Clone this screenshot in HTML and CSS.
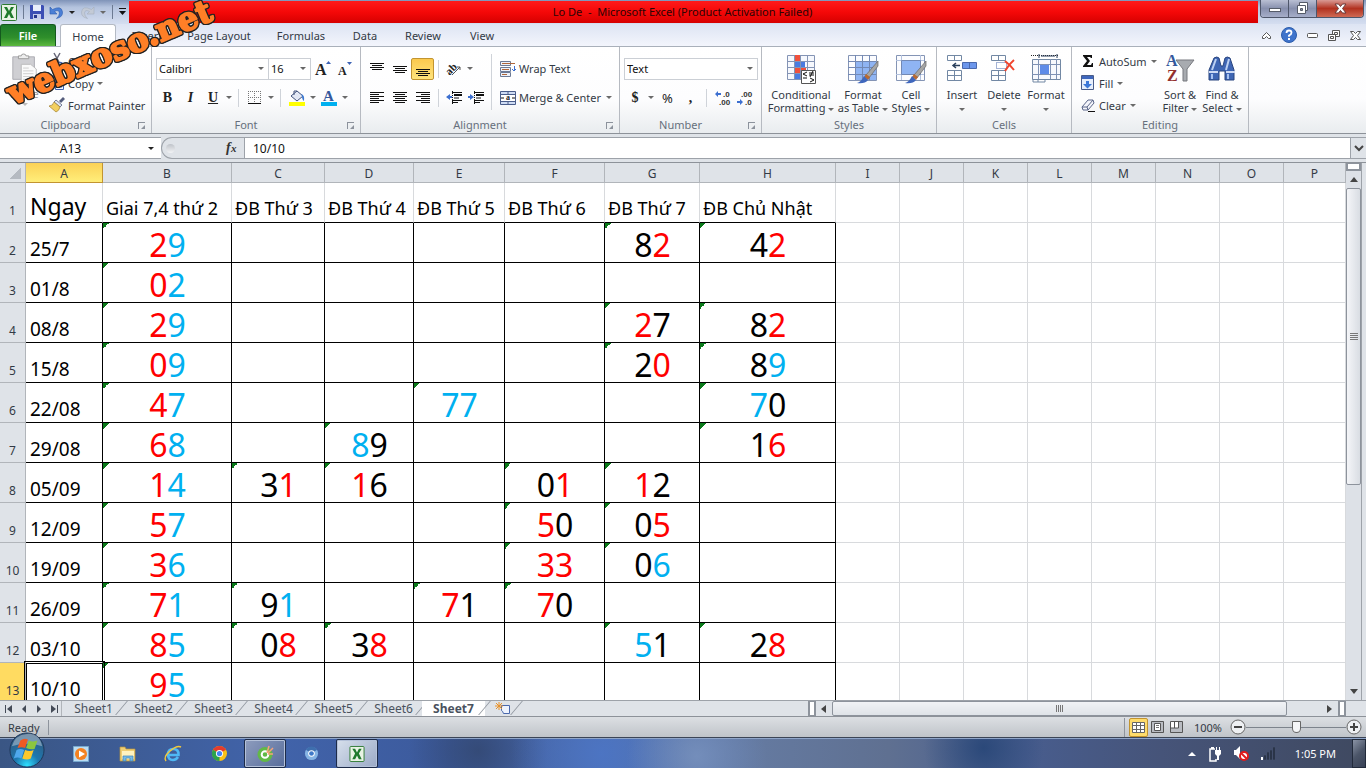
FILE: index.html
```html
<!DOCTYPE html>
<html lang="vi">
<head>
  <meta charset="UTF-8">
  <meta name="viewport" content="width=device-width, initial-scale=1.0">
  <title>Lo De - Microsoft Excel</title>
  <link rel="stylesheet" href="styles.css">
</head>
<body>

<header class="titlebar">
  <div class="quick-access">
    <svg width="16" height="17" viewBox="0 0 16 17"><rect x=".5" y=".5" width="15" height="16" rx="1" fill="#e8f3e4" stroke="#2e7a32"/><path d="M3 3h3l2 4 2-4h3L10 8l3 6h-3L8 10l-2 4H3l3-6z" fill="#1f7a2c"/></svg>
    <span class="bar"></span>
    <button aria-label="Save"><svg width="14" height="14" viewBox="0 0 14 14"><path d="M0 0h13l1 1v13H0z" fill="#3c4fb4"/><path d="M3 0h8v6H3z" fill="#e9eefb"/><path d="M3 9h8v5H3z" fill="#c4cbea"/><path d="M4 10h3v3H4z" fill="#26368c"/></svg></button>
    <button aria-label="Undo"><svg width="13" height="13" viewBox="0 0 13 13"><path d="M0 1v7h7L4.500 5.500Q9 3 9.500 7q0 3-3 5.500Q13 11 12.500 6 11.500-1 2.500 3.500z" fill="#4b7fd6" stroke="#2c5cae" stroke-width=".6"/></svg></button>
    <span class="caret dark"></span>
    <button aria-label="Redo"><svg width="13" height="13" viewBox="0 0 13 13"><path d="M13 1v7H6l2.500-2.500Q4 3 3.500 7q0 3 3 5.500Q0 11 .5 6 1.500-1 10.500 3.500z" fill="#c3cad6" stroke="#a5aebd" stroke-width=".6"/></svg></button>
    <span class="caret"></span>
    <span class="bar"></span>
    <button aria-label="Customize"><svg width="7" height="8" viewBox="0 0 7 8"><path d="M0 0h7v1H0zM0 3h7L3.500 7z" fill="#111"/></svg></button>
  </div>
  <h1 class="window-title">Lo De&nbsp; -&nbsp; Microsoft Excel (Product Activation Failed)</h1>
  <div class="window-buttons">
    <button aria-label="Minimize"><svg width="14" height="8" viewBox="0 0 14 8"><rect x="1.500" y="3.500" width="11" height="3" fill="#fff" stroke="#555b68"/></svg></button>
    <button aria-label="Restore"><svg width="13" height="13" viewBox="0 0 13 13"><path d="M3.500.5h8v8h-8z" fill="#fff" stroke="#555b68"/><path d="M1.500 3.500h8v8h-8z" fill="#fff" stroke="#555b68"/><path d="M4.500 6.500h2v2h-2z" fill="#8a91a5" stroke="#555b68"/></svg></button>
    <button class="close" aria-label="Close"><svg width="13" height="11" viewBox="0 0 13 11"><path d="M1 1h3.500l2 2.500 2-2.500H12L8.500 5.500 12 10H8.500l-2-2.500-2 2.500H1l3.500-4.500z" fill="#fff" stroke="#6b3a3a"/></svg></button>
  </div>
</header>

<nav class="tabs">
  <button class="file">File</button>
  <button class="active">Home</button>
  <button class="t-insert">Insert</button>
  <button class="t-layout">Page Layout</button>
  <button class="t-formulas">Formulas</button>
  <button class="t-data">Data</button>
  <button class="t-review">Review</button>
  <button class="t-view">View</button>
  <div class="tab-tools">
    <button aria-label="Minimize ribbon"><svg width="9" height="7" viewBox="0 0 9 7"><path d="M.5 4.500l4-4 4 4v2h-2l-2-2-2 2h-2z" fill="#fff" stroke="#555"/></svg></button>
    <button aria-label="Help"><svg width="16" height="16" viewBox="0 0 16 16"><circle cx="8" cy="8" r="7.500" fill="#3f74cc" stroke="#2b5cab"/><path d="M5.500 6Q5.500 3.500 8 3.500t2.500 2.300Q10.500 7.500 8 8.500v1.300" fill="none" stroke="#fff" stroke-width="1.800"/><path d="M7 11h2v2H7z" fill="#fff"/></svg></button>
    <button aria-label="Minimize window"><svg width="11" height="5" viewBox="0 0 11 5"><rect x=".5" y=".5" width="10" height="4" rx="1" fill="#fff" stroke="#555"/></svg></button>
    <button aria-label="Restore window"><svg width="12" height="11" viewBox="0 0 12 11"><path d="M4.500.5h7v6h-7z" fill="#fff" stroke="#555"/><path d="M6.500 2.500h3v2h-3z" fill="none" stroke="#555"/><path d="M.5 4.500h7v6h-7z" fill="#fff" stroke="#555"/><path d="M2.500 6.500h3v2h-3z" fill="none" stroke="#555"/></svg></button>
    <button aria-label="Close window"><svg width="11" height="9" viewBox="0 0 11 9"><path d="M.5.5h3l2 2 2-2h3l-3 4 3 4h-3l-2-2-2 2h-3l3-4z" fill="#fff" stroke="#555"/></svg></button>
  </div>
</nav>

<section class="ribbon">
  <div class="group g-clipboard">
    <div class="group-body">
      <button class="big paste"><svg width="28" height="32" viewBox="0 0 28 32"><path d="M1 3h23v24H1z" fill="#cfcfd3" stroke="#aaaab0"/><path d="M7 5V2h3q0-2 2.500-2T15 2h3v3z" fill="#eee" stroke="#999"/><path d="M10 11h10l6 5v14H10z" fill="#fafafa" stroke="#bbb"/><path d="M12 15h6M12 18h11M12 21h11M12 24h11M12 27h11" stroke="#ccc"/></svg><span>Paste</span><span class="caret pale"></span></button>
      <div class="stack">
        <button><svg width="16" height="16" viewBox="0 0 16 16"><path d="M5 0l5 9M11 0L6 9" stroke="#667" stroke-width="1.500"/><circle cx="5" cy="12" r="2.500" fill="none" stroke="#3c62b4" stroke-width="1.500"/><circle cx="11" cy="12" r="2.500" fill="none" stroke="#3c62b4" stroke-width="1.500"/></svg>Cut</button>
        <button><svg width="16" height="16" viewBox="0 0 16 16"><path d="M1.500 1.500h7v10h-7zM6.500 5.500h8v9h-8z" fill="#eef3fc" stroke="#3c62b4"/><path d="M8 8h5M8 10h5M8 12h5" stroke="#3c62b4"/></svg>Copy <span class="caret"></span></button>
        <button><svg width="16" height="16" viewBox="0 0 16 16"><path d="M10 4l4-4 2 2-4 4z" fill="#555d7c"/><path d="M7 3l6 5-2 2-6-5z" fill="#dfe4f2" stroke="#777f99"/><path d="M5 5l6 5q-1 4-4 5L0 9q4 0 5-4z" fill="#f2cf60" stroke="#a17f2f" stroke-width=".7"/></svg>Format Painter</button>
      </div>
    </div>
    <h2>Clipboard</h2><i class="launcher"></i>
  </div>

  <div class="group g-font">
    <div class="group-body rows">
      <div class="row">
        <span class="select font-name"><select aria-label="Font"><option>Calibri</option></select></span>
        <span class="select font-size"><select aria-label="Font size"><option>16</option></select></span>
        <button class="w23" aria-label="Grow font"><svg width="16" height="18" viewBox="0 0 16 18"><text x="0" y="15" class="serif-a" font-size="16">A</text><path d="M11 4l2.500-3L16 4z" fill="#3c62b4"/></svg></button>
        <button class="w22" aria-label="Shrink font"><svg width="14" height="18" viewBox="0 0 14 18"><text x="0" y="15" class="serif-a" font-size="12">A</text><path d="M9 2h5l-2.500 3z" fill="#3c62b4"/></svg></button>
      </div>
      <div class="row">
        <button class="w23 serif"><b>B</b></button>
        <button class="w23 serif"><b><i>I</i></b></button>
        <button class="w22 serif"><b><u>U</u></b></button>
        <span class="caret c10"></span><span class="sep"></span>
        <button class="w23" aria-label="Borders"><svg width="14" height="14" viewBox="0 0 14 14"><path d="M.5 0v13M6.500 0v13M12.500 0v13M0 .5h13M0 6.500h13" stroke="#777" stroke-dasharray="1 1"/><path d="M0 12.500h13" stroke="#111"/></svg></button>
        <span class="caret c10"></span><span class="sep"></span>
        <button class="w23" aria-label="Fill color"><svg width="16" height="16" viewBox="0 0 16 16"><path d="M2 6l6-5 6 5-6 5z" fill="#e3e8f5" stroke="#44547e"/><path d="M5 5V1h3" fill="none" stroke="#44547e"/><path d="M12 4q4 1 3 7-2-1-2-5z" fill="#3c78d0"/><path d="M0 12h16v4H0z" fill="#ff0"/></svg></button>
        <span class="caret c10"></span>
        <button class="w22" aria-label="Font color"><svg width="16" height="16" viewBox="0 0 16 16"><text x="2" y="11" class="serif-a blue" font-size="15">A</text><path d="M0 12h16v4H0z" fill="#00b0f0"/></svg></button>
        <span class="caret c10"></span>
      </div>
    </div>
    <h2>Font</h2><i class="launcher"></i>
  </div>

  <div class="group g-align">
    <div class="group-body">
      <div class="rows">
        <div class="row">
          <button class="w23" aria-label="Top align"><svg width="14" height="14" viewBox="0 0 14 14"><path d="M0 1.500h14M2 3.500h10M0 5.500h14M2 7.500h10" stroke="#111"/></svg></button>
          <button class="w23" aria-label="Middle align"><svg width="14" height="14" viewBox="0 0 14 14"><path d="M0 4.500h14M2 6.500h10M0 8.500h14M2 10.500h10" stroke="#111"/></svg></button>
          <button class="w23 pressed" aria-label="Bottom align"><svg width="14" height="14" viewBox="0 0 14 14"><path d="M0 7.500h14M2 9.500h10M0 11.500h14M2 13.500h10" stroke="#111"/></svg></button>
          <span class="sep"></span>
          <button class="w22" aria-label="Orientation"><svg width="17" height="15" viewBox="0 0 17 15"><text x="0" y="12" transform="rotate(-45 5 9)" font-size="11" class="serif-a">ab</text><path d="M6 14l8-8M14 9V6h-3" fill="none" stroke="#555"/></svg></button>
          <span class="caret c10"></span>
        </div>
        <div class="row">
          <button class="w23" aria-label="Align left"><svg width="14" height="12" viewBox="0 0 14 12"><path d="M0 .5h14M0 2.500h9M0 4.500h14M0 6.500h9M0 8.500h14M0 10.500h9" stroke="#111"/></svg></button>
          <button class="w23" aria-label="Center"><svg width="14" height="12" viewBox="0 0 14 12"><path d="M0 .5h14M2 2.500h10M0 4.500h14M2 6.500h10M0 8.500h14M2 10.500h10" stroke="#111"/></svg></button>
          <button class="w23" aria-label="Align right"><svg width="14" height="12" viewBox="0 0 14 12"><path d="M0 .5h14M5 2.500h9M0 4.500h14M5 6.500h9M0 8.500h14M5 10.500h9" stroke="#111"/></svg></button>
          <span class="sep"></span>
          <button class="w22" aria-label="Decrease indent"><svg width="16" height="14" viewBox="0 0 16 14"><path d="M6 1.500h10M8 7h5M6 9.500h10M6 11.500h6" stroke="#111"/><path d="M8 4h8" stroke="#111" stroke-width="2"/><path d="M6.500 0v14" stroke="#111" stroke-dasharray="1 1"/><path d="M0 6l4-3v2h2v2H4v2z" fill="#3c6fd0"/></svg></button>
          <button class="w22" aria-label="Increase indent"><svg width="16" height="14" viewBox="0 0 16 14"><path d="M6 1.500h10M8 7h5M6 9.500h10M6 11.500h6" stroke="#111"/><path d="M8 4h8" stroke="#111" stroke-width="2"/><path d="M6.500 0v14" stroke="#111" stroke-dasharray="1 1"/><path d="M6 6L2 3v2H0v2h2v2z" fill="#3c6fd0"/></svg></button>
        </div>
      </div>
      <span class="sep tall"></span>
      <div class="rows">
        <button class="label-btn"><svg width="16" height="16" viewBox="0 0 16 16"><path d="M.5.500h10v4H.5zM.5 6.500h10v4H.5zM.5 11.500h10v4H.5z" fill="#eef2fa" stroke="#6c7a95"/><path d="M2 2.500h13M2 8.500h7M2 13.500h5" stroke="#b0673a"/><path d="M14.500 5v4M12 8l2 2 2-2" fill="none" stroke="#3c6fd0"/></svg>Wrap Text</button>
        <button class="label-btn"><svg width="16" height="14" viewBox="0 0 16 14"><path d="M.5.500h15v13H.5z" fill="#cfdcf3" stroke="#4a5d8a"/><path d="M0 3.500h16M0 10.500h16M8 0v3M8 11v3" stroke="#4a5d8a"/><path d="M1 4h14v6H1z" fill="#fff"/><text x="6" y="9" font-size="8" class="serif-a">a</text><path d="M1 7h3M12 7h3" stroke="#111"/></svg>Merge &amp; Center <span class="caret"></span></button>
      </div>
    </div>
    <h2>Alignment</h2><i class="launcher"></i>
  </div>

  <div class="group g-number">
    <div class="group-body rows">
      <div class="row">
        <span class="select number-format"><select aria-label="Number format"><option>Text</option></select></span>
      </div>
      <div class="row">
        <button class="w22 serif"><b>$</b></button><span class="caret c10"></span>
        <button class="w23 percent">%</button>
        <button class="w23 serif"><b>,</b></button>
        <span class="sep"></span>
        <button class="w23" aria-label="Increase decimal"><svg width="16" height="14" viewBox="0 0 16 14"><text x="8" y="6" class="dec">.0</text><text x="4" y="14" class="dec">.00</text><path d="M0 3l3-3v2h3v2H3v2z" fill="#3c6fd0"/></svg></button>
        <button class="w22" aria-label="Decrease decimal"><svg width="16" height="14" viewBox="0 0 16 14"><text x="4" y="6" class="dec">.00</text><text x="8" y="14" class="dec">.0</text><path d="M6 11L3 8v2H0v2h3v2z" fill="#3c6fd0"/></svg></button>
      </div>
    </div>
    <h2>Number</h2><i class="launcher"></i>
  </div>

  <div class="group g-styles">
    <div class="group-body">
      <button class="big"><svg width="30" height="30" viewBox="0 0 30 30"><path d="M1.500 1.500h27v24h-27z" fill="#f6f8fd" stroke="#8494b5"/><path d="M8 1h6v24H8z" fill="#f0503c"/><path d="M8 7h11v6H8z" fill="#4a7be0"/><path d="M8 19h6v6H8z" fill="#4a7be0"/><path d="M8 13h12v6H8z" fill="#f0503c"/><path d="M8.500 1v24M14.500 1v24M21.500 1v24M1 7.500h27M1 13.500h27M1 19.500h27" stroke="#8494b5"/><path d="M15.500 16.500h14v13h-14z" fill="#fff" stroke="#555"/><path d="M21 18l-4 2 4 2M17 24h4M23 19h5M23 21h5M27 17l-3 6M24 24l4 2-4 2" fill="none" stroke="#111"/></svg><span>Conditional<br>Formatting <span class="caret"></span></span></button>
      <button class="big mid"><svg width="32" height="30" viewBox="0 0 32 30"><path d="M1.500 1.500h28v25h-28z" fill="#fbfcff" stroke="#8494b5"/><path d="M8 8h21v18H8z" fill="#8fb4f3"/><path d="M8.500 1v25M15.500 1v25M22.500 1v25M1 7.500h28M1 13.500h28M1 20.500h28" stroke="#7288b4"/><path d="M31 7v5l-9 12-3-3z" fill="#a6a6a6" stroke="#666" stroke-width=".7"/><path d="M19 20l4 3-2 3-4-3z" fill="#b86a32"/><path d="M17 22l4 4q-3 4-11 3 4-1 7-7z" fill="#3f67bd"/></svg><span>Format<br>as Table <span class="caret"></span></span></button>
      <button class="big small"><svg width="32" height="30" viewBox="0 0 32 30"><path d="M1.500 1.500h28v25h-28z" fill="#fbfcff" stroke="#8494b5"/><path d="M1 6.500h28M1 20.500h28M6.500 1v25M25.500 1v25" stroke="#b3c2de"/><path d="M6.500 6.500h19v14h-19z" fill="#8fb4f3" stroke="#7288b4"/><path d="M31 7v5l-9 12-3-3z" fill="#a6a6a6" stroke="#666" stroke-width=".7"/><path d="M19 20l4 3-2 3-4-3z" fill="#b86a32"/><path d="M17 22l4 4q-3 4-11 3 4-1 7-7z" fill="#3f67bd"/></svg><span>Cell<br>Styles <span class="caret"></span></span></button>
    </div>
    <h2>Styles</h2>
  </div>

  <div class="group g-cells">
    <div class="group-body">
      <button class="big small"><svg width="32" height="30" viewBox="0 0 32 30"><path d="M1.500 1.500h14v5h-14zM1.500 16.500h14v10h-14zM8.500 16v10M1 21.500h14M8.500 1v5" fill="#fff" stroke="#7288a4"/><path d="M16.500 8.500h14v6h-14z" fill="#6d97ec" stroke="#4a69ad"/><path d="M23.500 8v6" stroke="#4a69ad"/><path d="M7 11.500h7M10 9l-3 2.500 3 2.500" fill="none" stroke="#2a3f5c" stroke-width="1.500"/></svg><span>Insert<br><span class="caret"></span></span></button>
      <button class="big small"><svg width="28" height="30" viewBox="0 0 28 30"><path d="M1.500 1.500h14v5h-14zM1.500 16.500h14v10h-14zM8.500 16v10M1 21.500h14M8.500 1v5" fill="#fff" stroke="#7288a4"/><path d="M6.500 8.500h10v6h-10z" fill="none" stroke="#4a69ad" stroke-dasharray="1 1"/><path d="M15 7q5 4 9 9M24 6q-5 4-9 11" fill="none" stroke="#f0452e" stroke-width="2"/></svg><span>Delete<br><span class="caret"></span></span></button>
      <button class="big small"><svg width="32" height="30" viewBox="0 0 32 30"><path d="M2.500 5.500h28v20h-28z" fill="#f7f9fd" stroke="#7288a4"/><path d="M10 10h9v10h-9z" fill="#5d8be8"/><path d="M8.500 5v20M20.500 5v20M26.500 5v20M2 10.500h28M2 20.500h28" stroke="#7f92b4"/><path d="M3 25v3h12v-3M8 28v-3" fill="none" stroke="#7288a4"/><path d="M1 1.500h28" stroke="#222" stroke-dasharray="1 1"/><path d="M9 0v4M27 0v4M11 2h14" stroke="#2a3f5c"/></svg><span>Format<br><span class="caret"></span></span></button>
    </div>
    <h2>Cells</h2>
  </div>

  <div class="group g-editing">
    <div class="group-body">
      <div class="stack">
        <button><svg width="14" height="14" viewBox="0 0 14 14"><path d="M2 1h9v3h-1L9 3H6l3 4-3 4h4l1-2h1v4H2v-1l4-5-4-5z" fill="#111"/></svg>AutoSum <span class="caret"></span></button>
        <button><svg width="14" height="16" viewBox="0 0 14 16"><path d="M.5.500h12v14H.5z" fill="#e7effc" stroke="#4a5d8a"/><path d="M1 1h11v3H1z" fill="#3f67bd"/><path d="M5 6h3v3h3l-4.500 4.500L2 9h3z" fill="#3c78d8"/></svg>Fill <span class="caret"></span></button>
        <button><svg width="14" height="13" viewBox="0 0 14 13"><path d="M1 8l6-7h5l1 3-6 7H2z" fill="#f4f5fb" stroke="#5b678a"/><path d="M1 8h5l6-7M6 8l1 3" fill="none" stroke="#5b678a"/><path d="M7 12.500h7" stroke="#111"/></svg>Clear <span class="caret"></span></button>
      </div>
      <button class="big small"><svg width="30" height="30" viewBox="0 0 30 30"><path d="M11 6h18l-7 9v12h-4V15z" fill="#a8abb0" stroke="#77797f"/><text x="1" y="12" font-size="16" class="serif-a blue">A</text><text x="2" y="27" font-size="16" class="serif-a red">Z</text></svg><span>Sort &amp;<br>Filter <span class="caret"></span></span></button>
      <button class="big small"><svg width="28" height="28" viewBox="0 0 28 28"><path d="M6 3q3-2 5 0l2 8h2l2-8q2-2 5 0l4 12v10h-9v-9h-6v9H1V15z" fill="#3f66b4" stroke="#29447e"/><path d="M4 15l4-11M18 15l3-11" stroke="#bcd0f2" stroke-width="2"/><path d="M1 17h9M18 17h9" stroke="#cddaf4" stroke-width="2"/><path d="M4 19v5M20 19v5" stroke="#a7c2f0" stroke-width="2"/></svg><span>Find &amp;<br>Select <span class="caret"></span></span></button>
    </div>
    <h2>Editing</h2>
  </div>
</section>

<div class="formula-bar">
  <div class="name-box"><input aria-label="Name box" value="A13"><span class="caret dark"></span></div>
  <div class="fx"><span class="knob"></span><svg width="16" height="16" viewBox="0 0 16 16"><text x="2" y="12" class="fx-f">f</text><text x="7" y="12" class="fx-x">x</text></svg></div>
  <input class="formula" aria-label="Formula" value="10/10">
  <button class="expand" aria-label="Expand formula bar"><svg width="8" height="6" viewBox="0 0 8 6"><path d="M0 1l4 4 4-4" fill="none" stroke="#444" stroke-width="2"/></svg></button>
</div>

<main class="workspace">
  <div class="sheet">
    <table>
      <colgroup><col class="c-num"><col class="c-a"><col class="c-b"><col class="c-c"><col class="c-d"><col class="c-e"><col class="c-f"><col class="c-g"><col class="c-h"><col class="c-w"><col class="c-w"><col class="c-w"><col class="c-w"><col class="c-w"><col class="c-w"><col class="c-w"><col></colgroup>
      <thead>
        <tr><th class="corner"></th><th class="current">A</th><th>B</th><th>C</th><th>D</th><th>E</th><th>F</th><th>G</th><th>H</th><th>I</th><th>J</th><th>K</th><th>L</th><th>M</th><th>N</th><th>O</th><th>P</th></tr>
      </thead>
      <tbody>
        <tr class="heads"><th>1</th><td class="ngay">Ngay</td><td>Giai 7,4 thứ 2</td><td>ĐB Thứ 3</td><td>ĐB Thứ 4</td><td>ĐB Thứ 5</td><td>ĐB Thứ 6</td><td>ĐB Thứ 7</td><td>ĐB Chủ Nhật</td><td></td><td></td><td></td><td></td><td></td><td></td><td></td><td></td></tr>
        <tr><th>2</th><td>25/7</td><td class="n"><b>2</b><i>9</i></td><td></td><td></td><td></td><td></td><td class="n">8<b>2</b></td><td class="n">4<b>2</b></td><td></td><td></td><td></td><td></td><td></td><td></td><td></td><td></td></tr>
        <tr><th>3</th><td>01/8</td><td class="n"><b>0</b><i>2</i></td><td></td><td></td><td></td><td></td><td></td><td></td><td></td><td></td><td></td><td></td><td></td><td></td><td></td><td></td></tr>
        <tr><th>4</th><td>08/8</td><td class="n"><b>2</b><i>9</i></td><td></td><td></td><td></td><td></td><td class="n"><b>2</b>7</td><td class="n">8<b>2</b></td><td></td><td></td><td></td><td></td><td></td><td></td><td></td><td></td></tr>
        <tr><th>5</th><td>15/8</td><td class="n"><b>0</b><i>9</i></td><td></td><td></td><td></td><td></td><td class="n">2<b>0</b></td><td class="n">8<i>9</i></td><td></td><td></td><td></td><td></td><td></td><td></td><td></td><td></td></tr>
        <tr><th>6</th><td>22/08</td><td class="n"><b>4</b><i>7</i></td><td></td><td></td><td class="n"><i>77</i></td><td></td><td></td><td class="n"><i>7</i>0</td><td></td><td></td><td></td><td></td><td></td><td></td><td></td><td></td></tr>
        <tr><th>7</th><td>29/08</td><td class="n"><b>6</b><i>8</i></td><td></td><td class="n"><i>8</i>9</td><td></td><td></td><td></td><td class="n">1<b>6</b></td><td></td><td></td><td></td><td></td><td></td><td></td><td></td><td></td></tr>
        <tr><th>8</th><td>05/09</td><td class="n"><b>1</b><i>4</i></td><td class="n">3<b>1</b></td><td class="n"><b>1</b>6</td><td></td><td class="n">0<b>1</b></td><td class="n"><b>1</b>2</td><td></td><td></td><td></td><td></td><td></td><td></td><td></td><td></td><td></td></tr>
        <tr><th>9</th><td>12/09</td><td class="n"><b>5</b><i>7</i></td><td></td><td></td><td></td><td class="n"><b>5</b>0</td><td class="n">0<b>5</b></td><td></td><td></td><td></td><td></td><td></td><td></td><td></td><td></td><td></td></tr>
        <tr><th>10</th><td>19/09</td><td class="n"><b>3</b><i>6</i></td><td></td><td></td><td></td><td class="n"><b>33</b></td><td class="n">0<i>6</i></td><td></td><td></td><td></td><td></td><td></td><td></td><td></td><td></td><td></td></tr>
        <tr><th>11</th><td>26/09</td><td class="n"><b>7</b><i>1</i></td><td class="n">9<i>1</i></td><td></td><td class="n"><b>7</b>1</td><td class="n"><b>7</b>0</td><td></td><td></td><td></td><td></td><td></td><td></td><td></td><td></td><td></td><td></td></tr>
        <tr><th>12</th><td class="above">03/10</td><td class="n"><b>8</b><i>5</i></td><td class="n">0<b>8</b></td><td class="n">3<b>8</b></td><td></td><td></td><td class="n"><i>5</i>1</td><td class="n">2<b>8</b></td><td></td><td></td><td></td><td></td><td></td><td></td><td></td><td></td></tr>
        <tr><th class="current">13</th><td class="selected">10/10</td><td class="n"><b>9</b><i>5</i></td><td></td><td></td><td></td><td></td><td></td><td></td><td></td><td></td><td></td><td></td><td></td><td></td><td></td><td></td></tr>
      </tbody>
    </table>
  </div>
  <div class="vscroll">
    <span class="split"></span>
    <span class="arrow"><i class="tri up"></i></span>
    <span class="thumb"></span>
    <span class="track"></span>
    <span class="arrow"><i class="tri down"></i></span>
  </div>
</main>

<div class="sheet-bar">
  <div class="sheet-nav">
    <svg width="8" height="8" viewBox="0 0 8 8"><path d="M0 0h1v8H0zM7 0v8L2 4z" fill="#444b57"/></svg>
    <svg width="8" height="8" viewBox="0 0 8 8"><path d="M6 0v8L2 4z" fill="#444b57"/></svg>
    <svg width="8" height="8" viewBox="0 0 8 8"><path d="M2 0v8l4-4z" fill="#444b57"/></svg>
    <svg width="8" height="8" viewBox="0 0 8 8"><path d="M7 0h1v8H7zM1 0v8l5-4z" fill="#444b57"/></svg>
  </div>
  <div class="sheet-tabs">
    <button>Sheet1</button><button>Sheet2</button><button>Sheet3</button><button>Sheet4</button><button>Sheet5</button><button>Sheet6</button><button class="active">Sheet7</button>
    <button class="new" aria-label="Insert worksheet"><svg width="16" height="13" viewBox="0 0 16 13"><path d="M6.500 3.500h8v8h-6q-1-3-2-3z" fill="#eef3fd" stroke="#4a69ad"/><path d="M4 0v8M0 4h8M1 1l6 6M7 1L1 7" stroke="#e8922a"/></svg></button>
  </div>
  <div class="hscroll">
    <span class="grab"></span>
    <i class="tri left"></i>
    <span class="hthumb"></span>
    <span class="htrack"></span>
    <i class="tri right"></i>
    <span class="grab"></span>
  </div>
</div>

<footer class="status">
  <span class="ready">Ready</span>
  <div class="views">
    <button class="on" aria-label="Normal"><svg width="13" height="11" viewBox="0 0 13 11"><path d="M.5.500h12v10H.5zM4.500 0v11M8.500 0v11M0 3.500h13M0 7.500h13" fill="#fff" stroke="#666"/></svg></button>
    <button aria-label="Page layout"><svg width="13" height="12" viewBox="0 0 13 12"><path d="M.5.500h12v11H.5z" fill="#b9bcc2" stroke="#555"/><path d="M3.500 2.500h6v7h-6z" fill="#fff" stroke="#555"/><path d="M5 4.500h3M5 6.500h3" stroke="#777"/></svg></button>
    <button aria-label="Page break"><svg width="13" height="12" viewBox="0 0 13 12"><path d="M.5.500h12v11H.5z" fill="#b9bcc2" stroke="#555"/><path d="M1 1h3v6H1zM5 1h3v6H5z" fill="#fff"/><path d="M4.500 0v7M8.500 0v7H0" fill="none" stroke="#555"/></svg></button>
  </div>
  <span class="percent-label">100%</span>
  <svg width="16" height="16" viewBox="0 0 16 16"><circle cx="8" cy="8" r="7" fill="#eef0f3" stroke="#666"/><path d="M4 8h8" stroke="#444" stroke-width="2"/></svg>
  <input class="zoom" type="range" aria-label="Zoom" min="0" max="100" value="50">
  <svg width="16" height="16" viewBox="0 0 16 16"><circle cx="8" cy="8" r="7" fill="#eef0f3" stroke="#666"/><path d="M4 8h8M8 4v8" stroke="#444" stroke-width="2"/></svg>
</footer>

<div class="taskbar">
  <button class="start" aria-label="Start"><svg width="36" height="36" viewBox="0 0 38 38"><defs><radialGradient id="orb" cx=".5" cy=".95" r=".9"><stop offset="0" stop-color="#2fe0ff"/><stop offset=".4" stop-color="#1d78b0"/><stop offset="1" stop-color="#33597e"/></radialGradient></defs><circle cx="19" cy="19" r="18" fill="url(#orb)" stroke="#1b3557"/><path d="M3 15Q6 3 19 2t16 13Q19 10 3 15z" fill="#fff" opacity=".35"/><path d="M12 9q4-3 8-1l-3 9q-4-2-8 0z" fill="#ee5a24"/><path d="M21 9q4 2 9 0l-3 9q-4 1-9-1z" fill="#8cc63f"/><path d="M8 19q4-2 8 0l-3 9q-4-2-8 0z" fill="#4fa8ec"/><path d="M17 19q5 2 9 0l-3 9q-4 2-9 0z" fill="#fcc82c"/></svg></button>
  <button class="app" aria-label="Media Player"><svg width="16" height="16" viewBox="0 0 16 16"><path d="M.5.500h15v15H.5z" fill="#bcdcf2" stroke="#77a9cf"/><circle cx="8" cy="8" r="6" fill="#f58220"/><path d="M6 4.500L12 8l-6 3.500z" fill="#fff"/></svg></button>
  <button class="app" aria-label="Explorer"><svg width="17" height="16" viewBox="0 0 17 16"><path d="M1 1h5l1 2h9v12H1z" fill="#f0cf74" stroke="#b7923c" stroke-width=".7"/><path d="M3 5h12v8H3z" fill="#fff3c0"/><path d="M4 15v-5h10v5h-3v-3H7v3z" fill="#75bce8" stroke="#3c83b8" stroke-width=".7"/></svg></button>
  <button class="app" aria-label="Internet Explorer"><svg width="18" height="17" viewBox="0 0 18 17"><path d="M14 12q-2 3-5 3-5 0-5-5.500T9 4q6 0 5.500 6H5" fill="none" stroke="#4fb8f4" stroke-width="2.600"/><path d="M2 16Q-1 12 6 6t11-4" fill="none" stroke="#f3c93a" stroke-width="1.500"/></svg></button>
  <button class="app" aria-label="Chrome"><svg width="15" height="15" viewBox="0 0 16 16"><circle cx="8" cy="8" r="8" fill="#fbc116"/><path d="M8 8L1 4a8 8 0 0 1 14 0z" fill="#e33b2e"/><path d="M8 8v8A8 8 0 0 1 1 4z" fill="#2ba24c"/><circle cx="8" cy="8" r="3.800" fill="#fff"/><circle cx="8" cy="8" r="2.800" fill="#4285f4"/></svg></button>
  <button class="app open" aria-label="Coc Coc"><svg width="17" height="17" viewBox="0 0 17 17"><circle cx="8" cy="9.500" r="7.500" fill="#62b946"/><circle cx="8" cy="9.500" r="3.300" fill="none" stroke="#fff" stroke-width="2"/><path d="M10 8l2-7M11 8l5-5M11 9h5" stroke="#f6a27b" stroke-width="1.500"/></svg></button>
  <button class="app" aria-label="Chromium"><svg width="15" height="15" viewBox="0 0 16 16"><circle cx="8" cy="8" r="7" fill="#86b4e4"/><path d="M8 8L2 4a7 7 0 0 1 12 0z" fill="#3f6fae"/><circle cx="8" cy="8" r="3.500" fill="#fff"/><circle cx="8" cy="8" r="2.500" fill="#3f79c8"/></svg></button>
  <button class="app open current" aria-label="Excel"><svg width="16" height="16" viewBox="0 0 16 17"><rect x=".5" y=".5" width="15" height="16" rx="1" fill="#e8f3e4" stroke="#2e7a32"/><path d="M3 3h3l2 4 2-4h3L10 8l3 6h-3L8 10l-2 4H3l3-6z" fill="#1f7a2c"/></svg></button>
  <div class="tray">
    <svg width="8" height="4" viewBox="0 0 8 4"><path d="M0 4l4-4 4 4z" fill="#fff"/></svg>
    <svg width="14" height="16" viewBox="0 0 14 16"><path d="M7 3H2v12h6v-2" fill="none" stroke="#fff" stroke-width="1.500"/><path d="M3 1h3v2H3z" fill="#fff"/><path d="M7 4h6v4l-2 2v4H9v-4L7 8zM8 1h1v3H8zM11 1h1v3h-1z" fill="#fff"/></svg>
    <svg width="15" height="15" viewBox="0 0 15 15"><path d="M0 4h2l4-4v13L2 9H0z" fill="#fff"/><circle cx="10" cy="10" r="4" fill="#fff" stroke="#e01b1b" stroke-width="2"/><path d="M7 7l6 6" stroke="#e01b1b" stroke-width="2"/></svg>
    <svg width="15" height="13" viewBox="0 0 15 13"><path d="M0 10h2v3H0z" fill="#fff"/><path d="M3.500 8.500h1v4h-1zM6.500 5.500h1v7h-1zM9.500 3.500h1v9h-1zM12.500.500h1v12h-1z" fill="#6c7a92" stroke="#2a3448"/></svg>
    <span class="clock">1:05 PM</span>
    <button class="show-desktop" aria-label="Show desktop"></button>
  </div>
</div>

<svg class="watermark" width="230" height="120" viewBox="0 0 230 120"><text x="13" y="105" transform="rotate(-23 13 105)">webxoso.net</text></svg>

</body>
</html>
```

FILE: styles.css
```css
* {
  box-sizing: border-box;
}

body {
  margin: 0;
  height: 100vh;
  display: flex;
  flex-direction: column;
  overflow: hidden;
  font-family: "Noto Sans", sans-serif;
  font-size: 11px;
  color: #333a45;
  background: #dfe3e8;
}

button {
  font: inherit;
  color: inherit;
  background: none;
  border: 0;
  padding: 0;
  display: inline-flex;
  align-items: center;
  justify-content: center;
}

svg {
  flex: none;
  overflow: visible;
}

input {
  font: inherit;
  min-width: 0;
}

.caret {
  display: inline-block;
  flex: none;
  border: 3px solid transparent;
  border-top-color: #6a6a6a;
  border-bottom: 0;
  vertical-align: middle;
}

.caret.dark {
  border-top-color: #222;
}

.caret.pale {
  border-top-color: #bbb;
}

.caret.c10 {
  margin: 0 2px;
}

/* title bar */
.titlebar {
  flex: none;
  height: 24px;
  display: flex;
  background: linear-gradient(#7f93b8, #b4c3de 30%, #d5def0);
}

.quick-access {
  width: 129px;
  display: flex;
  align-items: center;
  gap: 6px;
  padding-left: 1px;
}

.quick-access .bar {
  width: 1px;
  height: 14px;
  background: #6c7a92;
}

.window-title {
  flex: 1;
  margin: 1px 0 0;
  height: 22px;
  line-height: 22px;
  text-align: center;
  font-size: 11px;
  font-weight: normal;
  color: #2b0505;
  padding-right: 22px;
  background: linear-gradient(#ff1a1a, #f50808 50%, #d60000);
}

.window-buttons {
  display: flex;
  height: 18px;
  margin: 0 2px;
  border: 1px solid #4e566a;
  border-top: 0;
  border-radius: 0 0 4px 4px;
  overflow: hidden;
}

.window-buttons button {
  width: 28px;
  background: linear-gradient(#b9bfd3, #878fad 50%, #a6aec9);
  border-right: 1px solid #4e566a;
}

.window-buttons .close {
  width: 46px;
  border: 0;
  background: linear-gradient(#d99a94, #b23220 50%, #cf6a54);
}

/* ribbon tabs */
.tabs {
  flex: none;
  height: 23px;
  display: flex;
  align-items: stretch;
  background: linear-gradient(#dde4f3, #f3f5fc);
  border-bottom: 1px solid #a9b0ba;
}

.tabs .file {
  width: 56px;
  color: #fff;
  font-weight: 600;
  background: linear-gradient(#1c7a2a, #2f8f2b 60%, #5cb83f);
  border: 1px solid #14591e;
  border-bottom: 0;
  border-radius: 3px 3px 0 0;
}

.tabs .active {
  width: 56px;
  margin: 0 0 -1px 4px;
  background: #fff;
  border: 1px solid #b4bac4;
  border-bottom: 0;
  border-radius: 3px 3px 0 0;
}

.t-insert {
  width: 62px;
}

.t-layout {
  width: 82px;
}

.t-formulas {
  width: 82px;
}

.t-data {
  width: 46px;
}

.t-review {
  width: 70px;
}

.t-view {
  width: 48px;
}

.tab-tools {
  margin-left: auto;
  display: flex;
  align-items: center;
  gap: 10px;
  padding-right: 5px;
}

/* ribbon */
.ribbon {
  flex: none;
  height: 87px;
  display: flex;
  background: linear-gradient(#fff, #fdfdfe 60%, #e9ecef);
  border-bottom: 1px solid #8d9299;
}

.group {
  position: relative;
  flex: none;
  display: flex;
  flex-direction: column;
  border-right: 1px solid #b6bac1;
}

.group h2 {
  margin: 0;
  height: 17px;
  line-height: 17px;
  text-align: center;
  font-size: 11px;
  font-weight: normal;
  color: #666f7c;
  padding-right: 20px;
}

.g-styles h2,
.g-cells h2,
.g-editing h2 {
  padding-right: 0;
}

.group-body {
  flex: 1;
  display: flex;
  min-height: 0;
}

.g-clipboard {
  width: 152px;
}

.g-font {
  width: 209px;
}

.g-align {
  width: 259px;
}

.g-number {
  width: 142px;
}

.g-styles {
  width: 175px;
}

.g-cells {
  width: 135px;
}

.g-editing {
  width: 177px;
}

.g-font .group-body,
.g-number .group-body,
.g-align .group-body,
.g-styles .group-body,
.g-cells .group-body {
  padding-left: 4px;
}

.launcher {
  position: absolute;
  right: 6px;
  bottom: 4px;
  width: 7px;
  height: 7px;
  border-top: 1px solid #8c929c;
  border-left: 1px solid #8c929c;
}

.launcher::after {
  content: "";
  position: absolute;
  right: 0;
  bottom: 0;
  border: 2px solid #8c929c;
  border-top-color: transparent;
  border-left-color: transparent;
}

.rows {
  display: flex;
  flex-direction: column;
  gap: 6px;
  padding-top: 10px;
}

.row {
  display: flex;
  align-items: center;
  height: 23px;
}

.w23 {
  width: 23px;
  height: 22px;
}

.w22 {
  width: 22px;
  height: 22px;
}

.pressed {
  border: 1px solid #c29430;
  border-radius: 2px;
  background: linear-gradient(#fbc94e, #ffe47c);
}

.sep {
  width: 1px;
  height: 18px;
  margin: 0 4px;
  background: #cfd3d9;
}

.sep.tall {
  height: 56px;
  margin: 7px 8px 0 4px;
}

.serif {
  font-family: "Liberation Serif", serif;
  font-size: 14px;
  color: #222;
}

.percent {
  font-size: 13px;
  color: #222;
}

.serif-a {
  font-family: "Liberation Serif", serif;
  font-weight: bold;
  fill: #222;
}

.serif-a.blue {
  fill: #34589c;
}

.serif-a.red {
  fill: #93302e;
}

.dec {
  font: bold 8px "Liberation Sans", sans-serif;
  fill: #333;
}

.select {
  position: relative;
  display: flex;
  height: 22px;
}

.select::after {
  content: "";
  position: absolute;
  right: 5px;
  top: 9px;
  border: 3px solid transparent;
  border-top-color: #666;
  border-bottom: 0;
  pointer-events: none;
}

.select select {
  appearance: none;
  width: 100%;
  font: inherit;
  color: #111;
  padding: 0 2px;
  background: #fff;
  border: 1px solid #cbcfd5;
  border-radius: 0;
}

.font-name {
  width: 113px;
}

.font-size {
  width: 43px;
  margin-left: -1px;
}

.number-format {
  width: 134px;
}

.label-btn {
  height: 23px;
  gap: 3px;
  justify-content: flex-start;
}

.label-btn .caret {
  margin-left: 2px;
}

.stack {
  display: flex;
  flex-direction: column;
  padding-top: 3px;
}

.stack button {
  height: 22px;
  gap: 3px;
  justify-content: flex-start;
}

.g-editing .stack {
  width: 77px;
  margin-left: 9px;
  margin-right: 1px;
}

.g-editing .stack button {
  gap: 4px;
}

.big {
  width: 70px;
  flex-direction: column;
  justify-content: flex-start;
  gap: 4px;
  padding-top: 7px;
  line-height: 13px;
}

.big svg {
  height: 30px;
}

.big span {
  white-space: nowrap;
}

.big.paste {
  width: 49px;
  gap: 3px;
  color: #999;
}

.big.mid {
  width: 54px;
}

.big.small {
  width: 42px;
}

/* formula bar */
.formula-bar {
  flex: none;
  height: 29px;
  padding: 3px 0;
  display: flex;
  border-bottom: 1px solid #8d9299;
}

.formula-bar > * {
  border: 1px solid #9da2a9;
  border-width: 1px 0;
}

.name-box {
  width: 161px;
  display: flex;
  align-items: center;
  background: #fff;
  padding-right: 7px;
}

.name-box input {
  flex: 1;
  border: 0;
  padding: 0 7px 0 0;
  text-align: center;
  font-size: 12px;
  color: #111;
}

.fx {
  width: 83px;
  display: flex;
  align-items: center;
  justify-content: space-between;
  padding: 0 4px;
  border-left: 1px solid #9da2a9;
  border-radius: 11px 0 0 11px;
}

.knob {
  width: 9px;
  height: 9px;
  border-radius: 50%;
  background: linear-gradient(#bfc3c9, #f2f3f5);
}

.fx-f {
  font: italic bold 14px "Liberation Serif", serif;
  fill: #333;
}

.fx-x {
  font: italic bold 11px "Liberation Serif", serif;
  fill: #333;
}

.formula-bar .formula {
  flex: 1;
  border-left: 1px solid #9da2a9;
  padding: 0 8px;
  font-size: 12px;
  color: #111;
}

.expand {
  width: 16px;
  border-left-width: 1px;
}

/* grid */
.workspace {
  flex: 1;
  min-height: 0;
  display: flex;
}

.sheet {
  flex: 1;
  min-width: 0;
  overflow: hidden;
  background: #fff;
}

table {
  width: 100%;
  table-layout: fixed;
  border-collapse: separate;
  border-spacing: 0;
}

.c-num {
  width: 26px;
}

.c-a {
  width: 77px;
}

.c-b {
  width: 129px;
}

.c-c {
  width: 93px;
}

.c-d {
  width: 89px;
}

.c-e {
  width: 91px;
}

.c-f {
  width: 100px;
}

.c-g {
  width: 95px;
}

.c-h {
  width: 136px;
}

.c-w {
  width: 64px;
}

th {
  padding: 0;
  font-size: 12px;
  font-weight: normal;
  background: #dfe3e8;
  border-right: 1px solid #b1b5ba;
  border-bottom: 1px solid #b1b5ba;
}

thead th {
  height: 20px;
  padding-top: 2px;
  line-height: 17px;
}

tbody th {
  height: 40px;
  line-height: 16px;
  padding-bottom: 3px;
  vertical-align: bottom;
}

.corner {
  background: linear-gradient(135deg, transparent 50%, #b5bac1 50%) no-repeat 10px 5px / 11px 11px #dfe3e8;
}

thead .current {
  background: linear-gradient(#fbd156, #ffee7a);
  border-color: #c29430;
}

tbody .current {
  background: #ffdb61;
}

td {
  height: 40px;
  padding: 0 3px 1px;
  vertical-align: bottom;
  font-size: 19px;
  line-height: 24px;
  color: #000;
  white-space: nowrap;
  border-right: 1px solid #d8dadd;
  border-bottom: 1px solid #d8dadd;
}

td:nth-child(-n+9) {
  border-color: #000;
}

.heads td:nth-child(-n+9) {
  border-right-color: #d8dadd;
}

.heads td {
  font-size: 18px;
  padding-bottom: 2px;
}

.heads .ngay {
  font-size: 23px;
  line-height: 28px;
}

td:nth-child(2) {
  padding-left: 4px;
}

td.n {
  padding: 0 2px 1px 3px;
  text-align: center;
  font-size: 32px;
  line-height: 32px;
  background: linear-gradient(135deg, #0a7a1a 50%, transparent 50%) no-repeat 0 0 / 6px 6px;
}

.n b {
  font-weight: normal;
  color: #f00;
}

.n i {
  font-style: normal;
  color: #00b0f0;
}

td.above {
  border-bottom-color: #fff;
}

td.selected {
  outline: 3px double #000;
  outline-offset: -1px;
}

.tri {
  border: 4px solid transparent;
}

.tri.up {
  border-bottom: 5px solid #444;
  border-top: 0;
}

.tri.down {
  border-top: 5px solid #444;
  border-bottom: 0;
}

.tri.left {
  border-right: 5px solid #444;
  border-left: 0;
}

.tri.right {
  border-left: 5px solid #444;
  border-right: 0;
}

.vscroll {
  width: 16px;
  margin-right: 4px;
  display: flex;
  flex-direction: column;
  background: #dde1e7;
  border-right: 1px solid #9da2a9;
}

.vscroll .split {
  height: 8px;
  background: #fff;
  border: 2px solid #8d939c;
  border-width: 1px 2px 2px;
}

.vscroll .arrow {
  height: 17px;
  display: flex;
  align-items: center;
  justify-content: center;
}

.vscroll .thumb {
  flex: 297;
  border: 1px solid #8d939c;
  border-radius: 2px;
  background:
    repeating-linear-gradient(#777 0 1px, transparent 1px 2px) no-repeat 50% 50% / 8px 7px,
    linear-gradient(90deg, #f4f5f8, #d9dde3);
}

.vscroll .track {
  flex: 199;
}

/* sheet tabs */
.sheet-bar {
  flex: none;
  height: 17px;
  display: flex;
  border-top: 1px solid #9da2a9;
  border-bottom: 1px solid #8d9299;
}

.sheet-nav {
  width: 62px;
  display: flex;
  align-items: center;
  gap: 7px;
  padding-left: 5px;
  border-right: 1px solid #b1b5ba;
}

.sheet-tabs {
  flex: 1;
  display: flex;
}

.sheet-tabs button {
  position: relative;
  width: 60px;
  padding-left: 3px;
  font-size: 12px;
  color: #4a525e;
  line-height: 14px;
}

.sheet-tabs button::after {
  content: "";
  position: absolute;
  right: 0;
  top: 0;
  width: 1px;
  height: 14px;
  background: #8d939c;
  transform: skewX(-40deg);
}

.sheet-tabs .active {
  width: 63px;
  padding-left: 0;
  font-weight: bold;
  background: #fff;
}

.sheet-tabs .new {
  width: 32px;
}

.hscroll {
  width: 558px;
  padding-right: 20px;
  display: flex;
  align-items: center;
}

.hscroll .grab {
  width: 8px;
  height: 15px;
  background: #fff;
  border: 2px solid #8d939c;
  border-width: 1px 2px;
}

.hscroll .tri.left {
  margin: 0 6px 0 5px;
}

.hscroll .tri.right {
  margin: 0 6px;
}

.hthumb {
  flex: 456;
  height: 15px;
  border: 1px solid #8d939c;
  border-radius: 2px;
  background:
    repeating-linear-gradient(90deg, #777 0 1px, transparent 1px 2px) no-repeat 50% 50% / 7px 7px,
    linear-gradient(#f1f3f6, #dfe3e8);
}

.htrack {
  flex: 34;
}

/* status bar */
.status {
  flex: none;
  height: 21px;
  display: flex;
  align-items: center;
  padding-right: 4px;
  background: linear-gradient(#dcdfe3, #c0c4c9);
  border-bottom: 1px solid #3c4556;
}

.ready {
  width: 49px;
  padding-left: 8px;
  border-right: 1px solid #8d939c;
}

.views {
  margin-left: auto;
  padding-left: 4px;
  display: flex;
  border-left: 1px solid #8d939c;
}

.views button {
  width: 19px;
  height: 19px;
}

.views .on {
  border: 1px solid #c29430;
  border-radius: 2px;
  background: #ffdc6b;
}

.percent-label {
  margin: 0 8px;
}

.zoom {
  appearance: none;
  width: 100px;
  height: 14px;
  margin: 0;
  background: linear-gradient(#7d838c, #7d838c) no-repeat 0 50% / 100% 1px;
}

.zoom::-webkit-slider-thumb {
  appearance: none;
  width: 9px;
  height: 12px;
  border: 1px solid #666;
  border-radius: 1px 1px 5px 5px;
  background: #f5f6f8;
}

/* taskbar */
.taskbar {
  flex: none;
  height: 30px;
  display: flex;
  align-items: center;
  border-top: 1px solid #8fa5c9;
  background:
    radial-gradient(circle at 72% 30%, rgba(34, 66, 116, 0.8), transparent 60px),
    radial-gradient(circle at 51% 60%, rgba(122, 148, 192, 0.8), transparent 70px),
    radial-gradient(circle at 44% 50%, rgba(76, 118, 200, 0.8), transparent 90px),
    radial-gradient(circle at 35% 40%, rgba(50, 70, 110, 0.8), transparent 70px),
    linear-gradient(90deg, #3a5684, #4163aa 20%, #3c5a9c 33%, #4f6fae 45%, #64799f 56%, #5f7091 65%, #485d8e 75%, #465479 85%, #3f4960);
}

.start {
  width: 54px;
  height: 36px;
  align-self: flex-end;
}

.app {
  width: 42px;
  height: 29px;
  margin-right: 4px;
}

.start + .app {
  margin-left: 6px;
}

.app.open {
  border: 1px solid #1d2b49;
  border-radius: 2px;
  box-shadow: inset 0 0 0 1px #b4c1d9;
  background: linear-gradient(135deg, #8d9cbd, #586d9c);
}

.app.current {
  background: linear-gradient(135deg, #d7e0ec, #9aa9c6);
}

.tray {
  margin-left: auto;
  align-self: stretch;
  display: flex;
  align-items: center;
  gap: 12px;
  color: #fff;
}

.clock {
  margin-left: 7px;
}

.show-desktop {
  width: 14px;
  height: 29px;
  margin-left: 4px;
  border: 1px solid #222b3b;
  background: linear-gradient(135deg, #8a93a5, #4b5568 50%, #384156);
}

/* site stamp laid over the corner */
.watermark {
  position: absolute;
  left: 0;
  top: 0;
  pointer-events: none;
  filter: drop-shadow(1px 0 0 #222) drop-shadow(-1px 0 0 #222) drop-shadow(0 1px 0 #222) drop-shadow(0 -1px 0 #222);
}

.watermark text {
  font: bold 32px "DejaVu Serif", serif;
  fill: #ff7f27;
  stroke: #ff7f27;
  stroke-width: 2px;
  stroke-linejoin: round;
}
```
